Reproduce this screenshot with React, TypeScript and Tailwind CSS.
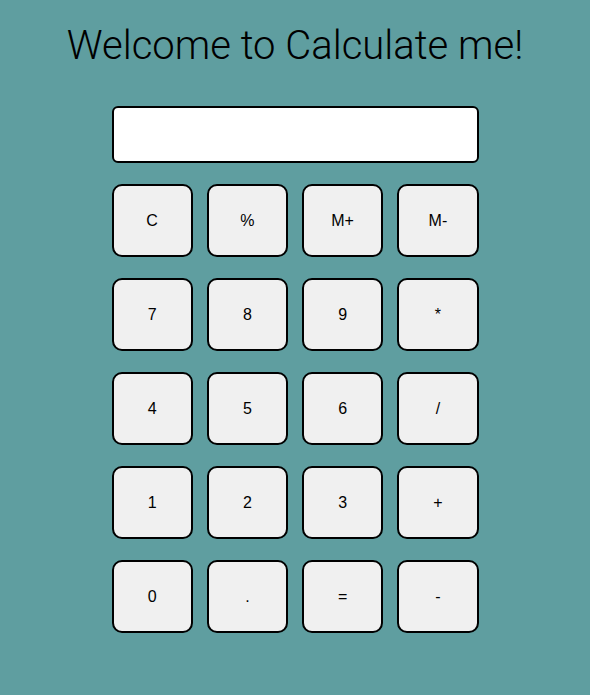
const keys = ["C", "%", "M+", "M-", "7", "8", "9", "*", "4", "5", "6", "/", "1", "2", "3", "+", "0", ".", "=", "-"];

export default function App() {
  return (
    <div className="min-h-[695px] w-full bg-[#5f9ea0] flex flex-col items-center pt-[22px]">
      <h1 className="font-['Roboto',sans-serif] text-[40px] leading-[47px] font-light text-black">
        Welcome to Calculate me!
      </h1>
      <div className="mt-[37px] w-[367px] flex flex-col gap-[21px]">
        {/* display */}
        <input
          type="text"
          readOnly
          className="h-[57px] w-full bg-white border-2 border-black rounded-[6px] outline-none px-2"
        />
        <div className="grid grid-cols-4 gap-x-[14px] gap-y-[21px]">
          {keys.map((k) => (
            <button
              key={k}
              className="h-[73px] w-full bg-[#f0f0f0] border-2 border-black rounded-[10px] font-['Liberation_Sans',Arial,sans-serif] text-[16px] text-black"
            >
              {k}
            </button>
          ))}
        </div>
      </div>
    </div>
  );
}
